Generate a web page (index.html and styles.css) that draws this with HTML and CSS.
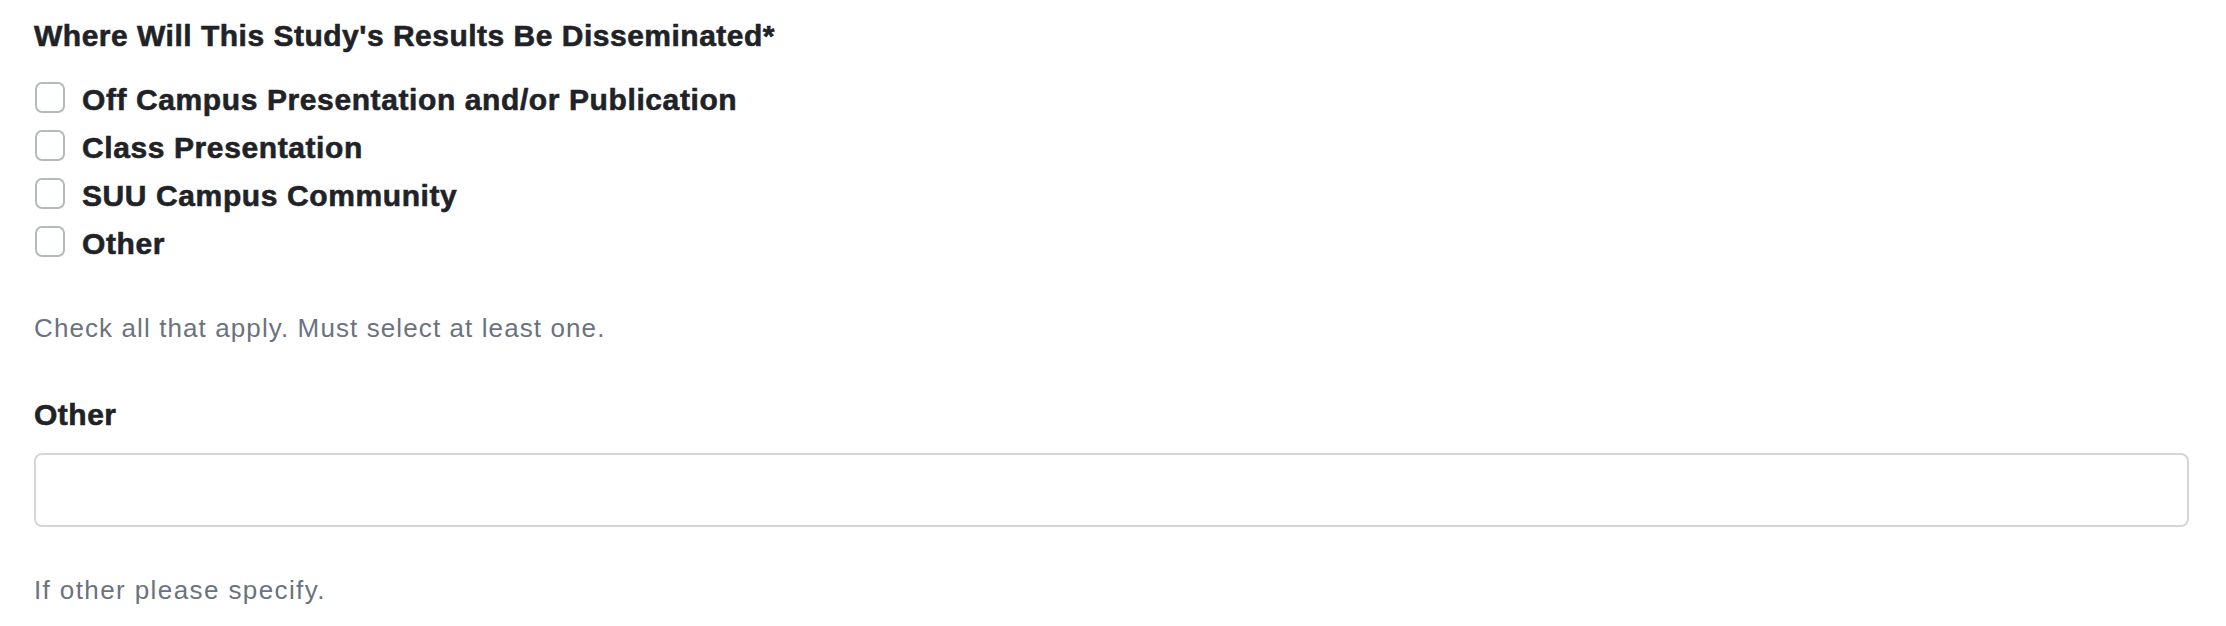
FILE: index.html
```html
<!DOCTYPE html>
<html lang="en">
<head>
<meta charset="utf-8">
<title>Dissemination</title>
<link rel="stylesheet" href="styles.css">
</head>
<body>
<form class="form">
  <fieldset class="group">
    <legend class="group-title">Where Will This Study's Results Be Disseminated*</legend>
    <div class="options">
      <label class="option"><input type="checkbox" class="box"><span class="option-text">Off Campus Presentation and/or Publication</span></label>
      <label class="option"><input type="checkbox" class="box"><span class="option-text">Class Presentation</span></label>
      <label class="option"><input type="checkbox" class="box"><span class="option-text">SUU Campus Community</span></label>
      <label class="option"><input type="checkbox" class="box"><span class="option-text">Other</span></label>
    </div>
    <p class="help help-group">Check all that apply. Must select at least one.</p>
  </fieldset>
  <div class="field">
    <label class="field-label" for="other">Other</label>
    <input id="other" class="text-input" type="text">
    <p class="help help-field">If other please specify.</p>
  </div>
</form>
</body>
</html>
```
FILE: styles.css
```css
html, body {
  margin: 0;
  padding: 0;
  background: #ffffff;
}
body {
  font-family: "Liberation Sans", Arial, sans-serif;
  color: #1f2328;
}
.form {
  display: flex;
  flex-direction: column;
  padding: 18px 37px 0 34px;
}
.group {
  border: 0;
  margin: 0;
  padding: 0;
  display: flex;
  flex-direction: column;
}
.group-title {
  padding: 0;
  font-size: 30px;
  line-height: 36px;
  font-weight: 700;
  letter-spacing: 0.5px;
  -webkit-text-stroke: 0.6px #1f2328;
}
.options {
  display: flex;
  flex-direction: column;
  gap: 12px;
  margin-top: 28px;
}
.option {
  display: flex;
  align-items: flex-start;
  gap: 17px;
  padding-left: 1px;
}
.box {
  appearance: none;
  -webkit-appearance: none;
  margin: 0;
  width: 30px;
  height: 31px;
  box-sizing: border-box;
  border: 2px solid #b4b9c1;
  border-radius: 7px;
  background: #ffffff;
  flex: none;
}
.option-text {
  font-size: 30px;
  line-height: 36px;
  font-weight: 700;
  letter-spacing: 0.6px;
  -webkit-text-stroke: 0.6px #1f2328;
}
.help {
  margin: 0;
  font-size: 26px;
  line-height: 32px;
  color: #6b7280;
  letter-spacing: 1.1px;
}
.help-group {
  margin-top: 50px;
}
.field {
  display: flex;
  flex-direction: column;
  margin-top: 53px;
}
.field-label {
  font-size: 30px;
  line-height: 36px;
  font-weight: 700;
  letter-spacing: 0.5px;
  -webkit-text-stroke: 0.6px #1f2328;
}
.text-input {
  margin-top: 20px;
  height: 74px;
  box-sizing: border-box;
  border: 2px solid #d3d6dc;
  border-radius: 8px;
  background: #ffffff;
  font: inherit;
  font-size: 26px;
  padding: 0 16px;
}
.help-field {
  margin-top: 47px;
  letter-spacing: 1.4px;
}
```
